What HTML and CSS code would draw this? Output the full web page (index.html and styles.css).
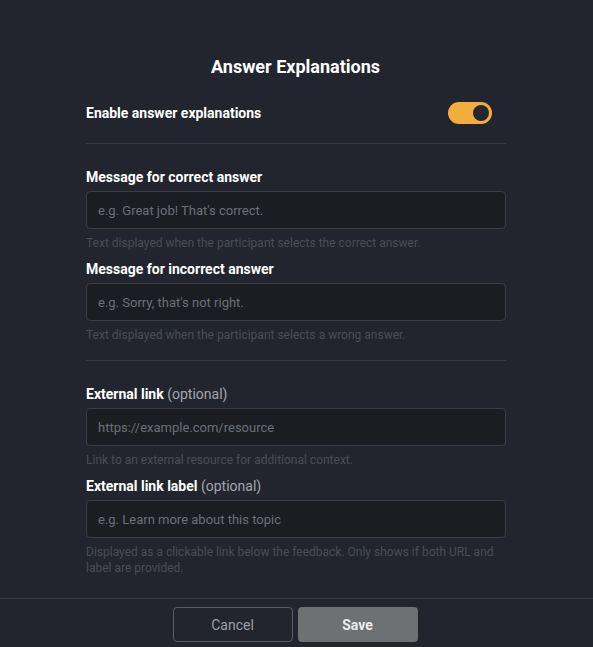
FILE: index.html
```html
<!DOCTYPE html>
<html lang="en">
<head>
<meta charset="utf-8">
<title>Answer Explanations</title>
<link rel="stylesheet" href="styles.css">
</head>
<body>
<div class="modal">
  <div class="content">
    <h2 class="title">Answer Explanations</h2>
    <div class="toggle-row">
      <span class="toggle-label">Enable answer explanations</span>
      <span class="toggle"><span class="knob"></span></span>
    </div>
    <hr class="divider">
    <div class="field">
      <label class="label">Message for correct answer</label>
      <input class="input" type="text" placeholder="e.g. Great job! That's correct.">
      <p class="help">Text displayed when the participant selects the correct answer.</p>
    </div>
    <div class="field">
      <label class="label">Message for incorrect answer</label>
      <input class="input" type="text" placeholder="e.g. Sorry, that's not right.">
      <p class="help">Text displayed when the participant selects a wrong answer.</p>
    </div>
    <hr class="divider divider-b">
    <div class="field">
      <label class="label">External link <span class="opt">(optional)</span></label>
      <input class="input" type="text" placeholder="https://example.com/resource">
      <p class="help">Link to an external resource for additional context.</p>
    </div>
    <div class="field">
      <label class="label">External link label <span class="opt">(optional)</span></label>
      <input class="input" type="text" placeholder="e.g. Learn more about this topic">
      <p class="help">Displayed as a clickable link below the feedback. Only shows if both URL and label are provided.</p>
    </div>
  </div>
  <div class="footer">
    <button class="btn btn-cancel">Cancel</button>
    <button class="btn btn-save">Save</button>
  </div>
</div>
</body>
</html>
```
FILE: styles.css
```css
html, body {
  margin: 0;
  padding: 0;
  background: #22252d;
  font-family: Roboto, "Liberation Sans", Arial, sans-serif;
  color: #ffffff;
}
.modal {
  width: 593px;
  height: 647px;
  overflow: hidden;
}
.content {
  width: 420px;
  margin-left: 86px;
  padding-top: 55px;
}
.title {
  margin: 0;
  font-size: 18px;
  line-height: 24px;
  font-weight: 700;
  text-align: center;
  color: #ffffff;
  padding-right: 1px;
}
.toggle-row {
  margin-top: 23px;
  display: flex;
  align-items: center;
  justify-content: space-between;
  height: 22px;
  padding-right: 14px;
}
.toggle-label {
  font-size: 14px;
  font-weight: 700;
  line-height: 20px;
}
.toggle {
  width: 44px;
  height: 22px;
  border-radius: 11px;
  background: #f3ad3c;
  display: flex;
  align-items: center;
  justify-content: flex-end;
  padding-right: 3px;
  box-sizing: border-box;
}
.knob {
  width: 16px;
  height: 16px;
  border-radius: 50%;
  background: #252830;
}
.divider {
  margin: 19px 0 0;
  border: 0;
  height: 1px;
  background: #363942;
}
.divider-b {
  margin-top: 17px;
}
.field {
  margin-top: 8px;
}
.divider + .field {
  margin-top: 23px;
}
.label {
  display: block;
  font-size: 14px;
  font-weight: 700;
  line-height: 20px;
  color: #ffffff;
}
.opt {
  font-weight: 400;
  color: #a3a6ad;
}
.input {
  display: block;
  box-sizing: border-box;
  width: 420px;
  height: 38px;
  margin-top: 4px;
  padding: 0 11px;
  background: #1c1d22;
  border: 1px solid #3a3d46;
  border-radius: 4px;
  font-family: Roboto, "Liberation Sans", Arial, sans-serif;
  font-size: 13px;
  color: #e6e6e6;
  outline: none;
}
.input::placeholder {
  color: #6c6f78;
}
.help {
  margin: 6px 0 0;
  font-size: 12px;
  line-height: 16px;
  color: #4a4d56;
}
.footer {
  margin-top: 22px;
  border-top: 1px solid #363942;
  display: flex;
  justify-content: center;
  gap: 5px;
  padding-top: 8px;
  padding-right: 3px;
}
.btn {
  width: 120px;
  height: 35px;
  border-radius: 4px;
  font-family: Roboto, "Liberation Sans", Arial, sans-serif;
  font-size: 14px;
  box-sizing: border-box;
}
.btn-cancel {
  background: transparent;
  border: 1px solid #5b5e6a;
  color: #9c9ea5;
}
.btn-save {
  background: #6f7072;
  border: 0;
  color: #ececec;
  font-weight: 700;
}
```
